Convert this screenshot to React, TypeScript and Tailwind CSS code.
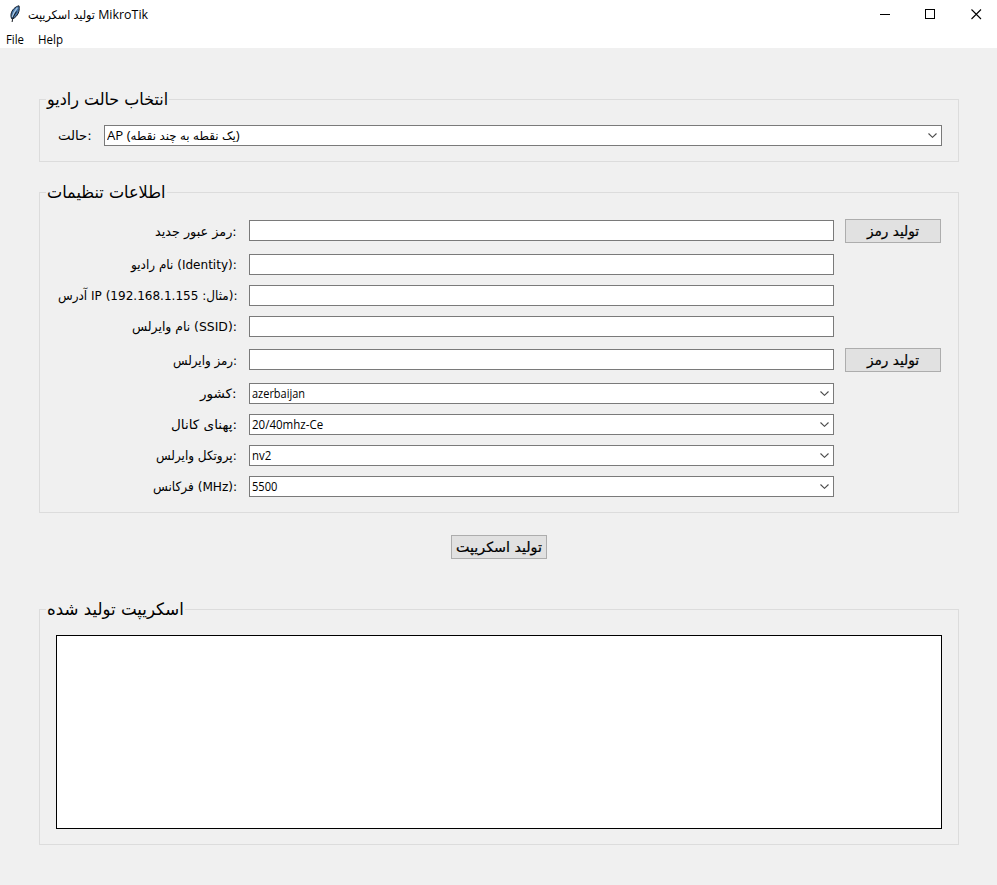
import { useLayoutEffect, useRef, useState } from "react";
import type { ReactNode } from "react";

/** Real text squeezed or stretched horizontally so that it fills `w` pixels. */
function Fit({ w, children, className = "" }: { w: number; children: ReactNode; className?: string }) {
  const ref = useRef<HTMLSpanElement>(null);
  const [scale, setScale] = useState(1);
  useLayoutEffect(() => {
    if (ref.current && ref.current.offsetWidth > 0) {
      setScale(w / ref.current.offsetWidth);
    }
  }, [w]);
  return (
    <span className="flex shrink-0 justify-start whitespace-nowrap" style={{ width: w }}>
      <span
        ref={ref}
        className={`block shrink-0 origin-left whitespace-nowrap ${className}`}
        style={{ transform: `scaleX(${scale})` }}
      >
        {children}
      </span>
    </span>
  );
}

function Chevron() {
  return (
    <svg width="9" height="5" viewBox="0 0 9 5" fill="none" className="shrink-0">
      <path d="M0.5 0.5L4.5 4.3L8.5 0.5" stroke="#4a4a4a" strokeWidth="1.1" />
    </svg>
  );
}

function Combo({ value, w }: { value: string; w: number }) {
  return (
    <div className="flex h-[21px] flex-1 items-center justify-between border border-[#7a7a7a] bg-white pl-[2px] pr-1">
      <Fit w={w} className="font-['Open_Sans','DejaVu_Sans_Condensed',sans-serif] text-[12px] leading-[18px]">
        {value}
      </Fit>
      <Chevron />
    </div>
  );
}

function Button({ children, w }: { children: string; w: number }) {
  return (
    <button className="flex h-6 w-24 shrink-0 items-center justify-center border border-[#adadad] bg-[#e1e1e1]">
      <Fit w={w} className="text-[14px] leading-[20px] [-webkit-text-stroke:0.2px_#000]">
        {children}
      </Fit>
    </button>
  );
}

function Group({ title, w, className, children }: { title: string; w: number; className: string; children: ReactNode }) {
  return (
    <fieldset className={`border border-[#dcdcdc] pb-[15px] ${className}`}>
      <legend className="ml-[6px] flex h-[21px] items-center px-px">
        <Fit w={w} className="text-[17px] leading-[21px]">
          {title}
        </Fit>
      </legend>
      {children}
    </fieldset>
  );
}

type Row = { label: string; lw: number; value?: string; vw?: number; button?: boolean; gap: string };

const rows: Row[] = [
  { label: "رمز عبور جدید:", lw: 82, button: true, gap: "mt-0" },
  { label: "نام رادیو (Identity):", lw: 106, gap: "mt-[11px]" },
  { label: "آدرس IP (مثال: 192.168.1.155):", lw: 179, gap: "mt-[10px]" },
  { label: "نام وایرلس (SSID):", lw: 105, gap: "mt-[10px]" },
  { label: "رمز وایرلس:", lw: 64, button: true, gap: "mt-[11px]" },
  { label: "کشور:", lw: 37, value: "azerbaijan", vw: 53, gap: "mt-[11px]" },
  { label: "پهنای کانال:", lw: 66, value: "20/40mhz-Ce", vw: 71, gap: "mt-[10px]" },
  { label: "پروتکل وایرلس:", lw: 81, value: "nv2", vw: 19, gap: "mt-[10px]" },
  { label: "فرکانس (MHz):", lw: 84, value: "5500", vw: 25, gap: "mt-[10px]" },
];

function FormRow({ row }: { row: Row }) {
  return (
    <div className={`flex items-start ${row.gap} ${row.button ? "h-6" : "h-[21px]"}`}>
      <div className={`flex h-[21px] w-[181px] items-center justify-end ${row.button ? "mt-[2px]" : ""}`}>
        <Fit w={row.lw} className="text-[13px] leading-[21px]">
          {row.label}
        </Fit>
      </div>
      <div className={`ml-3 flex w-[585px] ${row.button ? "mt-px" : ""}`}>
        {row.value ? (
          <Combo value={row.value} w={row.vw ?? 50} />
        ) : (
          <div className="h-[21px] flex-1 border border-[#7a7a7a] bg-white" />
        )}
      </div>
      {row.button && (
        <div className="ml-[11px]">
          <Button w={52}>تولید رمز</Button>
        </div>
      )}
    </div>
  );
}

export default function App() {
  return (
    <div className="h-[885px] w-[997px] overflow-hidden bg-[#f0f0f0] font-['DejaVu_Sans_Condensed','DejaVu_Sans',sans-serif] text-black">
      <header className="flex h-[30px] items-center justify-between bg-white pb-[2px] pl-2">
        <div className="flex items-center">
          <svg width="14" height="18" viewBox="0 0 14 18" className="mr-[6px]">
            <path d="M11 0.8C7.2 1.6 3.6 5 3 9.4C2.8 11.4 3.2 13 4 14.2C7.4 12.8 9.9 10 10.8 6.7C11.3 4.6 11.5 2.6 11 0.8Z" fill="#4374a8" stroke="#17202c" strokeWidth="1" />
            <path d="M9.4 2.6C6.8 5.6 5.2 8.6 4.3 12" stroke="#a9c6e0" strokeWidth="1.4" fill="none" />
            <path d="M8.6 6.5C6 10 4.4 13.2 4.1 17" stroke="#14181e" strokeWidth="1" fill="none" />
          </svg>
          <Fit w={120} className="pt-[2px] font-['Open_Sans','DejaVu_Sans_Condensed',sans-serif] text-[12px] leading-[20px]">
            تولید اسکریپت MikroTik
          </Fit>
        </div>
        <div className="flex items-center gap-[35px] pr-[15px]">
          <svg width="11" height="11" viewBox="0 0 11 11">
            <path d="M1 5.5H11" stroke="#000" />
          </svg>
          <svg width="11" height="11" viewBox="0 0 11 11">
            <rect x="0.5" y="0.5" width="9" height="9" fill="none" stroke="#000" />
          </svg>
          <svg width="11" height="11" viewBox="0 0 11 11">
            <path d="M0.5 0.5L10 10M10 0.5L0.5 10" stroke="#000" strokeWidth="1.1" />
          </svg>
        </div>
      </header>
      <nav className="flex h-[18px] items-center gap-[14px] bg-white pl-[6px] pt-px font-['Open_Sans',sans-serif] text-[12px] leading-[17px]">
        <Fit w={18}>File</Fit>
        <Fit w={25}>Help</Fit>
      </nav>

      <main className="flex flex-col pl-[39px] pr-[38px] pt-[41px]">
        <Group title="انتخاب حالت رادیو" w={121} className="pt-[15px]">
          <div className="flex h-[21px] items-center pl-[18px] pr-4">
            <Fit w={34} className="text-[13px] leading-[21px]">
              حالت:
            </Fit>
            <div className="ml-3 flex flex-1">
              <Combo value="AP (یک نقطه به چند نقطه)" w={133} />
            </div>
          </div>
        </Group>

        <Group title="اطلاعات تنظیمات" w={119} className="mt-5 pt-4">
          <div className="pl-4">
            {rows.map((row) => (
              <FormRow key={row.label} row={row} />
            ))}
          </div>
        </Group>

        <div className="mt-[22px] flex justify-center">
          <Button w={86}>تولید اسکریپت</Button>
        </div>

        <Group title="اسکریپت تولید شده" w={137} className="mt-10 pt-[15px]">
          <div className="pl-4 pr-4">
            <div className="h-[194px] border border-black bg-white" />
          </div>
        </Group>
      </main>
    </div>
  );
}
